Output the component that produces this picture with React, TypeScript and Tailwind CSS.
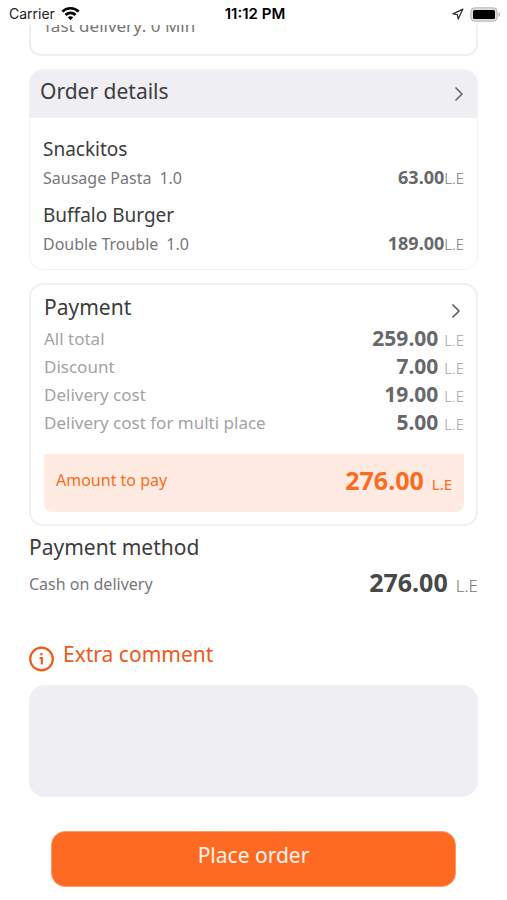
import { ChevronRight } from "lucide-react";

const orders = [
  { place: "Snackitos", item: "Sausage Pasta", quantity: "1.0", price: "63.00" },
  {
    place: "Buffalo Burger",
    item: "Double Trouble",
    quantity: "1.0",
    price: "189.00",
  },
];

const costs = [
  { label: "All total", value: "259.00" },
  { label: "Discount", value: "7.00" },
  { label: "Delivery cost", value: "19.00" },
  { label: "Delivery cost for multi place", value: "5.00" },
];

function StatusBar() {
  return (
    <header className="grid h-[25px] grid-cols-3 items-center pt-[3px] pr-[6px] pl-[9px] font-['Inter',sans-serif] text-sm leading-5 text-[#222]">
      <div className="flex items-center gap-[6px]">
        <span>Carrier</span>
        <svg viewBox="0 0 19 14" className="h-[14px] w-[19px]" fill="#000">
          <path d="M9.5 0C5.9 0 2.7 1.4.4 3.7l1.9 1.9a10.2 10.2 0 0 1 14.4 0l1.9-1.9A12.9 12.9 0 0 0 9.5 0Z" />
          <path d="M9.5 4.6c-2.3 0-4.4.9-5.9 2.4l1.9 1.9a5.7 5.7 0 0 1 8 0L15.4 7a8.4 8.4 0 0 0-5.9-2.4Z" />
          <path d="M9.5 9.2c-1.1 0-2 .4-2.7 1.1l2.7 2.9 2.7-2.9a3.8 3.8 0 0 0-2.7-1.1Z" />
        </svg>
      </div>
      <div className="text-center text-[15px] font-semibold text-black">
        11:12 PM
      </div>
      <div className="flex items-center justify-end gap-[6px]">
        <svg viewBox="0 0 12 12" className="size-3" fill="none">
          <path
            d="M10.8 1.2 1 5.8l4.4.8.8 4.4Z"
            stroke="#333"
            strokeWidth="1.3"
            strokeLinejoin="round"
          />
        </svg>
        <svg viewBox="0 0 31 15" className="h-[15px] w-[31px]">
          <rect x=".8" y=".8" width="26.4" height="13.4" rx="4" fill="#ddd" stroke="#b5b5b5" />
          <rect x="3" y="3" width="22" height="9" rx="1.5" fill="#000" />
          <path d="M28.5 5.2v4.6c1-.4 1.7-1.3 1.7-2.3s-.7-1.9-1.7-2.3Z" fill="#b5b5b5" />
        </svg>
      </div>
    </header>
  );
}

export default function App() {
  return (
    <div className="min-h-screen bg-white font-['Noto_Sans',sans-serif] text-[#3c3c3e]">
      <StatusBar />

      <main className="px-[29px] pb-[13px]">
        {/* Delivery card, scrolled under the status bar */}
        <div className="flex h-[31px] flex-col justify-end overflow-hidden">
          <div className="shrink-0 rounded-xl border-2 border-[#f0f0f2] px-[14px] pt-3 pb-4 text-[17px] leading-6 text-[#777]">
            fast delivery: 0 Min
          </div>
        </div>

        <section className="mt-[13px] overflow-hidden rounded-[14px] border border-[#f2f2f4]">
          <button className="flex h-12 w-full items-center justify-between bg-[#eeeef3] pr-[6px] pl-[10px] text-left">
            <span className="pb-[6px] text-[21px] leading-7">Order details</span>
            <ChevronRight className="size-6 text-[#6b6b6e]" strokeWidth={1.75} />
          </button>
          <div className="flex flex-col gap-[10px] px-[13px] pt-[17px] pb-3">
            {orders.map((order) => (
              <div key={order.place}>
                <h3 className="text-[19px] leading-7">{order.place}</h3>
                <div className="flex h-7 items-baseline justify-between text-base leading-7 text-[#77777a]">
                  <span>
                    {order.item}
                    <span className="ml-2">{order.quantity}</span>
                  </span>
                  <span>
                    <b className="text-[18px] text-[#68686b]">{order.price}</b>
                    <span className="text-[15px] font-light">L.E</span>
                  </span>
                </div>
              </div>
            ))}
          </div>
        </section>

        <section className="mt-[13px] rounded-[14px] border-2 border-[#f0f0f2] p-3 pl-[13px]">
          <button className="flex h-7 w-full items-center justify-between text-left">
            <span className="pb-2 text-[21px] leading-5">Payment</span>
            <ChevronRight className="-mr-1 size-6 text-[#5b5b5e]" strokeWidth={1.75} />
          </button>
          {costs.map((cost) => (
            <div key={cost.label} className="flex h-7 items-center justify-between text-[17px] leading-7 text-[#a3a3a6]">
              <span>{cost.label}</span>
              <span className="flex items-baseline gap-[6px]">
                <b className="text-[21px] text-[#68686b]">{cost.value}</b>
                <span className="text-[15px] font-light">L.E</span>
              </span>
            </div>
          ))}
          <div className="mt-[17px] flex h-[58px] items-center justify-between rounded-b-lg bg-[#ffebe2] px-3 pb-[6px] text-[#fc6b22]">
            <span className="text-base">Amount to pay</span>
            <span className="flex items-baseline gap-2">
              <b className="text-[25px] leading-8">276.00</b>
              <span className="text-[15px]">L.E</span>
            </span>
          </div>
        </section>

        <section className="mt-[7px]">
          <h2 className="text-[21px] leading-7">Payment method</h2>
          <div className="mt-[7px] flex h-8 items-center justify-between text-base leading-8 text-[#77777a]">
            <span>Cash on delivery</span>
            <span className="flex items-baseline gap-2">
              <b className="text-[25px] text-[#48484a]">276.00</b>
              <span className="text-[17px] font-light">L.E</span>
            </span>
          </div>
        </section>

        <section className="mt-10">
          <label htmlFor="comment" className="flex items-center gap-2 text-[21px] leading-7 text-[#f05a1c]">
            <svg viewBox="0 0 26 26" className="mt-[6px] size-[26px]" fill="none">
              <circle cx="12.5" cy="13" r="11.3" stroke="currentColor" strokeWidth="2.2" />
              <path d="M10.6 12h2.2v6.6M12.4 7v2.2" stroke="currentColor" strokeWidth="2.2" />
            </svg>
            <span className="pb-1">Extra comment</span>
          </label>
          <textarea
            id="comment"
            className="mt-[13px] block h-28 w-full resize-none rounded-2xl bg-[#eeeef3] p-3 text-base outline-none"
          />
        </section>

        <div className="mt-[34px] px-[22px]">
          <button className="h-14 w-full rounded-[14px] border border-[#ff9a66] bg-[#ff6a22] pb-[6px] text-[21px] text-[#fff3ec]">
            Place order
          </button>
        </div>
      </main>
    </div>
  );
}
